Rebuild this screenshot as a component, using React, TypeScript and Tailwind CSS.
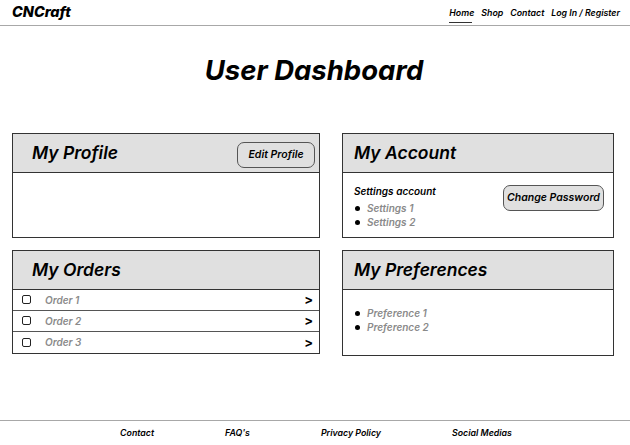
import React from "react";

const font = { fontFamily: "Inter, 'Noto Sans', sans-serif" };

const CardHeader = ({ title, pl, children }: { title: string; pl: string; children?: React.ReactNode }) => {
  return (
    <div className={`flex flex-row h-[39px] items-center justify-between bg-[#e0e0e0] border-b border-[#333] ${pl}`}>
      <h2 className="text-[17.5px] font-semibold italic text-black leading-none">{title}</h2>
      {children}
    </div>
  );
};

const Bullets = ({ items }: { items: string[] }) => {
  return (
    <ul className="flex flex-col">
      {items.map((item) => (
        <li key={item} className="flex flex-row items-center h-[14px] text-[10px] font-semibold italic text-[#8a8a8a]">
          <span className="w-[5px] h-[5px] rounded-full bg-black ml-[1px] mr-[7px]" />
          {item}
        </li>
      ))}
    </ul>
  );
};

const OrderRow = ({ label, last }: { label: string; last?: boolean }) => {
  return (
    <div className={`flex flex-row h-[21px] items-center pl-[9px] pr-[6px] ${last ? "" : "border-b border-[#555]"}`}>
      <span className="w-[9px] h-[9px] border border-[#222] rounded-[2px]" />
      <span className="ml-[14px] mt-[1px] text-[10px] font-semibold italic text-[#8a8a8a]">{label}</span>
      <span className="ml-auto text-[13px] font-bold text-black leading-none">&gt;</span>
    </div>
  );
};

const App = () => {
  return (
    <div className="flex flex-col w-full h-screen bg-white text-black overflow-hidden" style={font}>
      <header className="flex flex-row h-[26px] items-center justify-between pl-[12px] pr-[10px] border-b border-[#a8a8a8]">
        <span className="text-[14.5px] font-extrabold italic leading-none">CNCraft</span>
        <nav className="flex flex-row gap-[7px] text-[8.8px] font-semibold italic">
          <span className="relative">
            Home
            <span className="absolute left-0 right-[2px] -bottom-[4px] h-[1px] bg-[#333]" />
          </span>
          <span>Shop</span>
          <span>Contact</span>
          <span>Log In / Register</span>
        </nav>
      </header>

      <h1 className="mt-[31px] text-center text-[27.5px] font-bold italic leading-none pr-[2px]">User Dashboard</h1>

      <main className="grid grid-cols-[308px_272px] gap-x-[22px] gap-y-[12px] mt-[48px] pl-[12px]">
        <section className="flex flex-col h-[105px] border border-[#333]">
          <CardHeader title="My Profile" pl="pl-[19px] pr-[4px]">
            <button className="w-[78px] h-[26px] mt-[4px] rounded-[7px] border border-[#555] bg-[#e0e0e0] text-[10.5px] font-semibold italic">
              Edit Profile
            </button>
          </CardHeader>
        </section>

        <section className="flex flex-col h-[105px] border border-[#333]">
          <CardHeader title="My Account" pl="pl-[11px]" />
          <div className="flex flex-row justify-between pl-[11px] pr-[9px] pt-[12px]">
            <div className="flex flex-col">
              <span className="text-[10px] font-semibold italic text-black leading-[13px] mb-[4px]">Settings account</span>
              <Bullets items={["Settings 1", "Settings 2"]} />
            </div>
            <button className="w-[101px] h-[26px] rounded-[7px] border border-[#555] bg-[#e0e0e0] text-[10.5px] font-semibold italic">
              Change Password
            </button>
          </div>
        </section>

        <section className="flex flex-col h-[104px] border border-[#333]">
          <CardHeader title="My Orders" pl="pl-[19px]" />
          <OrderRow label="Order 1" />
          <OrderRow label="Order 2" />
          <OrderRow label="Order 3" last />
        </section>

        <section className="flex flex-col h-[106px] border border-[#333]">
          <CardHeader title="My Preferences" pl="pl-[11px]" />
          <div className="pl-[11px] pt-[17px]">
            <Bullets items={["Preference 1", "Preference 2"]} />
          </div>
        </section>
      </main>

      <footer className="mt-auto flex flex-row h-[25px] items-center justify-center gap-[71px] border-t border-[#a8a8a8] text-[8.8px] font-semibold italic pl-[2px]">
        <span>Contact</span>
        <span>FAQ's</span>
        <span>Privacy Policy</span>
        <span>Social Medias</span>
      </footer>
    </div>
  );
};

export default App;
